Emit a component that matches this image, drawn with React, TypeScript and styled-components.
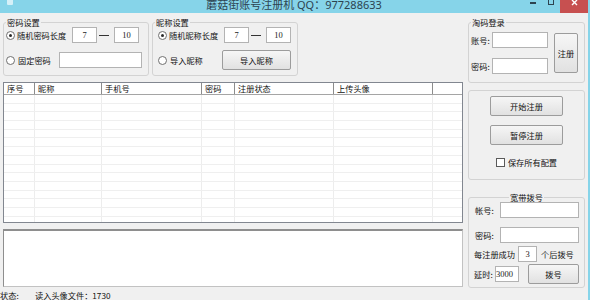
import React from "react";
import styled, { createGlobalStyle } from "styled-components";

const CJK = `"Noto Sans CJK SC", "Noto Sans", sans-serif`;

const GlobalStyle = createGlobalStyle`
  html, body { margin: 0; padding: 0; background: #f0f0f0; }
  body { font-family: ${CJK}; font-size: 8.2px; color: #111; overflow: hidden; }
  * { box-sizing: border-box; }
`;

const Window = styled.div`
  width: 590px;
  height: 300px;
  overflow: hidden;
  background: #f0f0f0;
  display: flex;
  flex-direction: column;
  border-right: 2px solid #86d4e9;
`;

const TitleBar = styled.div`
  position: relative;
  height: 13px;
  flex: none;
  background: #86d4e9;
  display: flex;
  justify-content: center;
  overflow: hidden;
`;

const Title = styled.div`
  font-family: "Noto Sans", ${CJK};
  font-size: 11px;
  line-height: 11px;
  margin-top: -1px;
  color: #2d4350;
  white-space: nowrap;
`;

const AppIcon = styled.svg`
  position: absolute;
  left: 6px;
  top: -2px;
`;

const Controls = styled.div`
  position: absolute;
  top: 0;
  right: 0;
  height: 13px;
  display: flex;
  align-items: flex-start;
`;

const MinBtn = styled.span`
  width: 6px;
  height: 2px;
  margin-top: 2px;
  margin-right: 12px;
  background: #2d4350;
`;

const MaxBtn = styled.span`
  width: 6px;
  height: 5px;
  margin-right: 6px;
  border: 1px solid #2d4350;
  border-top: none;
`;

const CloseBtn = styled.span`
  width: 28px;
  height: 13px;
  background: #c75050;
  display: flex;
  justify-content: center;
  align-items: flex-start;
`;

const Body = styled.div`
  display: flex;
  gap: 5px;
  padding: 4px 0 0 3px;
  height: 275px;
  flex: none;
`;

const LeftCol = styled.div`
  width: 460px;
  display: flex;
  flex-direction: column;
`;

const TopRow = styled.div`
  display: flex;
  gap: 3px;
  height: 59px;
`;

const Group = styled.fieldset<{ $w: number; $h: number }>`
  margin: 0;
  padding: 0;
  min-width: 0;
  width: ${(p) => p.$w}px;
  height: ${(p) => p.$h}px;
  border: 1px solid #d3d3d3;
  border-radius: 3px;
  flex: none;
`;

const Legend = styled.legend<{ $center?: boolean }>`
  padding: 0 1px;
  margin-left: ${(p) => (p.$center ? "auto" : "2px")};
  margin-right: ${(p) => (p.$center ? "auto" : "0")};
  font-size: 8.2px;
  line-height: 10px;
  height: 10px;
`;

const GroupBody = styled.div<{ $pl: number; $pt?: number }>`
  display: flex;
  flex-direction: column;
  padding-left: ${(p) => p.$pl}px;
  padding-top: ${(p) => p.$pt ?? 0}px;
`;

const Row = styled.div<{ $h: number; $mt?: number }>`
  display: flex;
  align-items: center;
  height: ${(p) => p.$h}px;
  margin-top: ${(p) => p.$mt ?? 0}px;
  white-space: nowrap;
`;

const Radio = styled.span<{ $checked?: boolean }>`
  width: 9px;
  height: 9px;
  border-radius: 50%;
  border: 1px solid #707070;
  background: #fff;
  flex: none;
  display: flex;
  align-items: center;
  justify-content: center;
  &::after {
    content: "";
    width: 3px;
    height: 3px;
    border-radius: 50%;
    background: ${(p) => (p.$checked ? "#2a2a2a" : "transparent")};
  }
`;

const Check = styled.span`
  width: 9px;
  height: 9px;
  border: 1px solid #5a5a5a;
  background: #fff;
  flex: none;
`;

const Text = styled.span<{ $w?: number; $ml?: number }>`
  display: inline-block;
  width: ${(p) => (p.$w ? `${p.$w}px` : "auto")};
  margin-left: ${(p) => p.$ml ?? 0}px;
  flex: none;
  line-height: 12px;
`;

const Field = styled.div<{ $w: number; $ml?: number; $align?: string }>`
  width: ${(p) => p.$w}px;
  height: 16px;
  margin-left: ${(p) => p.$ml ?? 0}px;
  border: 1px solid #b3b3b3;
  background: #fff;
  flex: none;
  display: flex;
  align-items: center;
  justify-content: ${(p) => p.$align ?? "center"};
  font-family: "Liberation Serif", serif;
  font-size: 8.5px;
  color: #222;
`;

const Dash = styled.span`
  width: 10px;
  height: 1px;
  margin: 0 5px 0 2px;
  background: #333;
  flex: none;
`;

const Button = styled.button<{ $w: number; $h: number; $ml?: number; $mt?: number }>`
  width: ${(p) => p.$w}px;
  height: ${(p) => p.$h}px;
  margin: ${(p) => p.$mt ?? 0}px 0 0 ${(p) => p.$ml ?? 0}px;
  padding: 0;
  flex: none;
  border: 1px solid #9c9c9c;
  border-radius: 2px;
  background: linear-gradient(#f6f6f6, #e1e1e1);
  font-family: ${CJK};
  font-size: 8.2px;
  color: #111;
`;

const COLS = "31px 67px 100px 33px 99px 99px 1fr";

const Table = styled.div`
  margin-top: 6px;
  height: 141px;
  border: 1px solid #828790;
  background: #fff;
  display: flex;
  flex-direction: column;
  overflow: hidden;
`;

const HeaderRow = styled.div`
  display: grid;
  grid-template-columns: ${COLS};
  height: 12px;
  flex: none;
  border-bottom: 1px solid #a5a5a5;
`;

const HeaderCell = styled.div<{ $last?: boolean }>`
  padding-left: 3px;
  line-height: 11px;
  border-right: ${(p) => (p.$last ? "none" : "1px solid #8c8c8c")};
  white-space: nowrap;
`;

const DataRow = styled.div`
  display: grid;
  grid-template-columns: ${COLS};
  height: 8.7px;
  flex: none;
  border-bottom: 1px solid #efefef;
`;

const DataCell = styled.div<{ $last?: boolean }>`
  border-right: ${(p) => (p.$last ? "none" : "1px solid #ededed")};
`;

const Log = styled.div`
  margin-top: 6px;
  height: 58px;
  background: #fff;
  border: 1px solid #c2c2c2;
  border-top: 2px solid #8e8e8e;
  border-left: 1px solid #8e8e8e;
`;

const RightCol = styled.div`
  width: 117px;
  display: flex;
  flex-direction: column;
`;

const LoginBody = styled.div`
  display: flex;
  padding: 5px 0 0 2px;
`;

const LoginFields = styled.div`
  display: flex;
  flex-direction: column;
  gap: 10px;
`;

const ActionBox = styled.div`
  margin-top: 7px;
  height: 90px;
  border: 1px solid #d3d3d3;
  border-radius: 3px;
  display: flex;
  flex-direction: column;
  align-items: center;
  padding-top: 5px;
`;

const CheckRow = styled.div`
  display: flex;
  align-items: center;
  gap: 3px;
  margin-top: 12px;
  height: 10px;
  white-space: nowrap;
`;

const DialWrap = styled.div`
  margin-top: 12px;
`;

const StatusBar = styled.div`
  height: 12px;
  flex: none;
  display: flex;
  align-items: flex-start;
  padding-left: 0;
  white-space: nowrap;
  overflow: hidden;
`;

const StatusText = styled.span<{ $w?: number }>`
  width: ${(p) => (p.$w ? `${p.$w}px` : "auto")};
  line-height: 14px;
  flex: none;
`;

const headers = ["序号", "昵称", "手机号", "密码", "注册状态", "上传头像", ""];

export default function App() {
  const rows = Array.from({ length: 16 });
  return (
    <>
      <GlobalStyle />
      <Window>
        <TitleBar>
          <AppIcon width="8" height="8" viewBox="0 0 8 8">
            <rect x="1" y="1" width="6" height="6" rx="1" fill="#e8f6fb" opacity="0.8" />
          </AppIcon>
          <Title>蘑菇街账号注册机 QQ：977288633</Title>
          <Controls>
            <MinBtn />
            <MaxBtn />
            <CloseBtn>
              <svg width="7" height="7" viewBox="0 0 7 7">
                <path d="M1 0 L6 5 M6 0 L1 5" stroke="#fff" strokeWidth="1.4" />
              </svg>
            </CloseBtn>
          </Controls>
        </TitleBar>

        <Body>
          <LeftCol>
            <TopRow>
              <Group $w={146} $h={59}>
                <Legend>密码设置</Legend>
                <GroupBody $pl={2}>
                  <Row $h={16}>
                    <Radio $checked />
                    <Text $w={55} $ml={2}>随机密码长度</Text>
                    <Field $w={25}>7</Field>
                    <Dash />
                    <Field $w={25}>10</Field>
                  </Row>
                  <Row $h={20} $mt={7}>
                    <Radio />
                    <Text $w={41} $ml={3}>固定密码</Text>
                    <Field $w={83} />
                  </Row>
                </GroupBody>
              </Group>
              <Group $w={146} $h={59}>
                <Legend>昵称设置</Legend>
                <GroupBody $pl={5}>
                  <Row $h={16}>
                    <Radio $checked />
                    <Text $w={55} $ml={2}>随机昵称长度</Text>
                    <Field $w={25}>7</Field>
                    <Dash />
                    <Field $w={25}>10</Field>
                  </Row>
                  <Row $h={20} $mt={7}>
                    <Radio />
                    <Text $w={52} $ml={3}>导入昵称</Text>
                    <Button $w={69} $h={20}>导入昵称</Button>
                  </Row>
                </GroupBody>
              </Group>
            </TopRow>

            <Table>
              <HeaderRow>
                {headers.map((h, i) => (
                  <HeaderCell key={i} $last={i === headers.length - 1}>
                    {h}
                  </HeaderCell>
                ))}
              </HeaderRow>
              {rows.map((_, r) => (
                <DataRow key={r}>
                  {headers.map((_, i) => (
                    <DataCell key={i} $last={i === headers.length - 1} />
                  ))}
                </DataRow>
              ))}
            </Table>

            <Log />
          </LeftCol>

          <RightCol>
            <Group $w={117} $h={66}>
              <Legend>淘码登录</Legend>
              <LoginBody>
                <LoginFields>
                  <Row $h={16}>
                    <Text $w={21}>账号:</Text>
                    <Field $w={56} />
                  </Row>
                  <Row $h={16}>
                    <Text $w={21}>密码:</Text>
                    <Field $w={56} />
                  </Row>
                </LoginFields>
                <Button $w={24} $h={40} $ml={6} $mt={1}>注册</Button>
              </LoginBody>
            </Group>

            <ActionBox>
              <Button $w={73} $h={20}>开始注册</Button>
              <Button $w={73} $h={20} $mt={9}>暂停注册</Button>
              <CheckRow>
                <Check />
                <span>保存所有配置</span>
              </CheckRow>
            </ActionBox>

            <DialWrap>
              <Group $w={117} $h={96}>
                <Legend $center>宽带拨号</Legend>
                <GroupBody $pl={5}>
                  <Row $h={16}>
                    <Text $w={25} $ml={1}>帐号:</Text>
                    <Field $w={79} />
                  </Row>
                  <Row $h={16} $mt={9}>
                    <Text $w={25} $ml={1}>密码:</Text>
                    <Field $w={79} />
                  </Row>
                  <Row $h={16} $mt={3}>
                    <Text $w={44}>每注册成功</Text>
                    <Field $w={19}>3</Field>
                    <Text $ml={4}>个后拨号</Text>
                  </Row>
                  <Row $h={20} $mt={2}>
                    <Text $w={21}>延时:</Text>
                    <Field $w={24} $align="flex-start">3000</Field>
                    <Button $w={51} $h={20} $ml={9}>拨号</Button>
                  </Row>
                </GroupBody>
              </Group>
            </DialWrap>
          </RightCol>
        </Body>

        <StatusBar>
          <StatusText $w={35}>状态:</StatusText>
          <StatusText>读入头像文件：1730</StatusText>
        </StatusBar>
      </Window>
    </>
  );
}
